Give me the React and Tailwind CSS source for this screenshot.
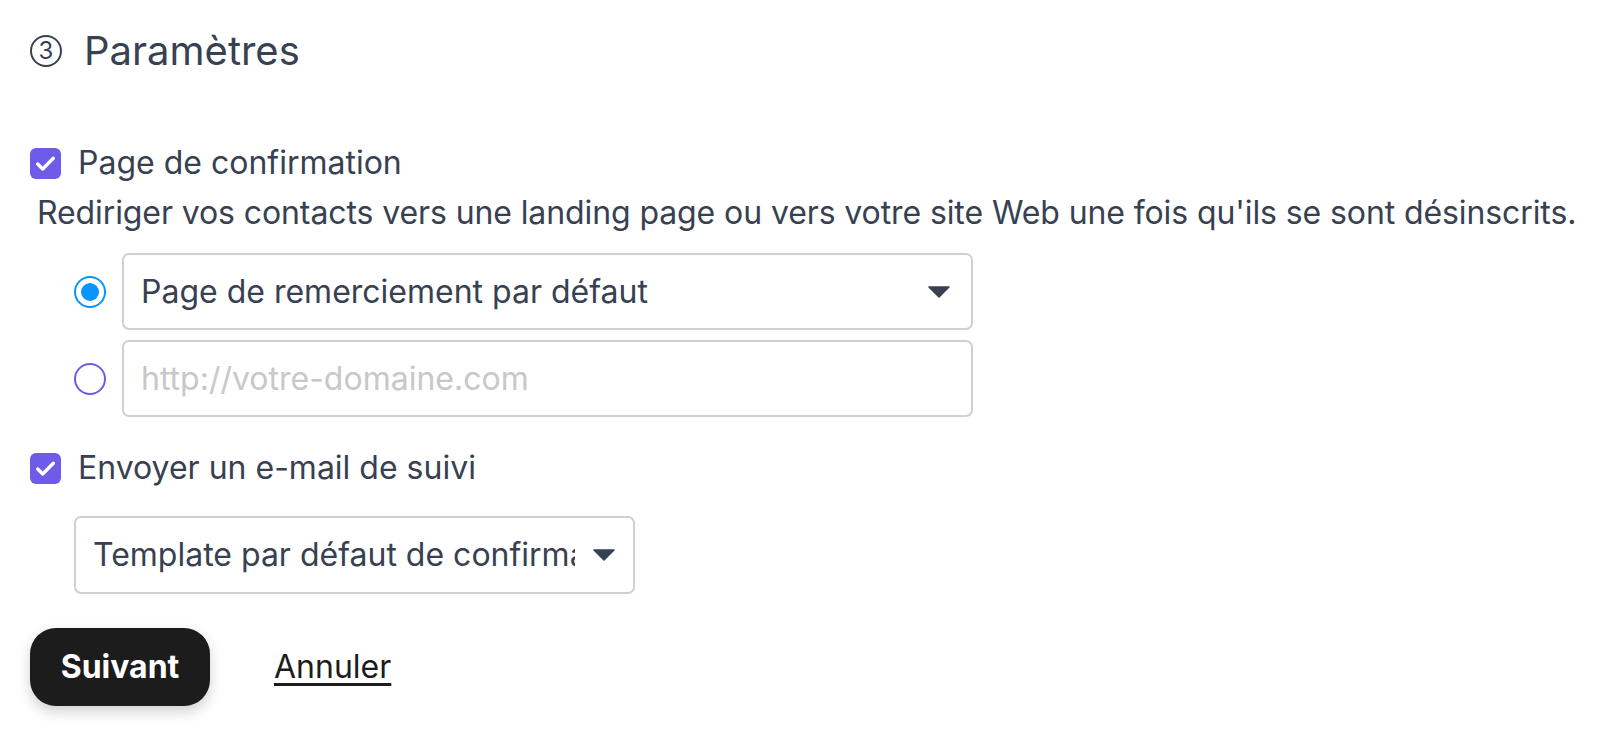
import { useState } from 'react'

function Check() {
  return (
    <span className="flex h-[31px] w-[31px] shrink-0 items-center justify-center rounded-[6px] bg-[#6c5ce7]">
      <svg width="25" height="25" viewBox="0 0 24 24" fill="none">
        <path d="M4.5 12.5l4.8 4.8L19.5 7" stroke="#fff" strokeWidth="3.2" strokeLinecap="round" strokeLinejoin="round" />
      </svg>
    </span>
  )
}

function Caret() {
  return (
    <svg width="22" height="12" viewBox="0 0 22 12" className="shrink-0">
      <path d="M1 1h20L11 11z" fill="#374151" stroke="#374151" strokeWidth="1.5" strokeLinejoin="round" />
    </svg>
  )
}

export default function App() {
  const [mode, setMode] = useState('default')

  return (
    <div
      className="min-h-screen bg-white pl-[30px] pt-[27px] text-[#374151]"
      style={{ fontFamily: 'Inter, "Noto Sans", sans-serif' }}
    >
      {/* step title */}
      <div className="flex h-[48px] items-center gap-[22px]">
        <span className="flex h-[32px] w-[32px] items-center justify-center rounded-full border-2 border-[#374151] text-[24px] leading-none">
          3
        </span>
        <h2 className="text-[40px] leading-[48px]">Paramètres</h2>
      </div>

      <label className="mt-[68px] flex h-[40px] items-center gap-[17px]">
        <Check />
        <span className="text-[32px] leading-[40px]">Page de confirmation</span>
      </label>
      <p className="mt-[10px] pl-[7px] text-[32px] leading-[40px] whitespace-nowrap tracking-[-0.1px]">
        Rediriger vos contacts vers une landing page ou vers votre site Web une fois qu'ils se sont désinscrits.
      </p>

      <div className="mt-[20px] flex flex-col gap-[10px] pl-[44px]">
        <div className="flex items-center gap-[16px]">
          <button
            onClick={() => setMode('default')}
            className={
              mode === 'default'
                ? 'flex h-[32px] w-[32px] shrink-0 items-center justify-center rounded-full border-2 border-[#0a94ff]'
                : 'h-[32px] w-[32px] shrink-0 rounded-full border-2 border-[#6c5ce7]'
            }
          >
            {mode === 'default' && <span className="h-[18px] w-[18px] rounded-full bg-[#0a94ff]" />}
          </button>
          <div className="flex h-[77px] w-[851px] items-center justify-between rounded-[7px] border-2 border-[#d0d0d0] pl-[17px] pr-[21px]">
            <span className="text-[32px]">Page de remerciement par défaut</span>
            <Caret />
          </div>
        </div>
        <div className="flex items-center gap-[16px]">
          <button
            onClick={() => setMode('url')}
            className={
              mode === 'url'
                ? 'flex h-[32px] w-[32px] shrink-0 items-center justify-center rounded-full border-2 border-[#0a94ff]'
                : 'h-[32px] w-[32px] shrink-0 rounded-full border-2 border-[#6c5ce7]'
            }
          >
            {mode === 'url' && <span className="h-[18px] w-[18px] rounded-full bg-[#0a94ff]" />}
          </button>
          <input
            placeholder="http://votre-domaine.com"
            className="h-[77px] w-[851px] rounded-[7px] border-2 border-[#d0d0d0] pl-[17px] text-[32px] outline-none placeholder:text-[#c8c8c8]"
          />
        </div>
      </div>

      <label className="mt-[31px] flex h-[40px] items-center gap-[17px]">
        <Check />
        <span className="text-[32px] leading-[40px]">Envoyer un e-mail de suivi</span>
      </label>

      <div className="ml-[44px] mt-[28px] flex h-[78px] w-[561px] items-center gap-[18px] rounded-[7px] border-2 border-[#d0d0d0] pl-[17px] pr-[18px]">
        <span className="min-w-0 flex-1 overflow-hidden whitespace-nowrap text-[32px]">
          Template par défaut de confirmation
        </span>
        <Caret />
      </div>

      <div className="mt-[34px] flex items-center gap-[64px]">
        <button className="h-[78px] w-[180px] rounded-[26px] bg-[#1c1c1c] text-[32px] font-bold text-white shadow-[0_6px_14px_rgba(0,0,0,0.18)]">
          Suivant
        </button>
        <a href="#" className="text-[32px] text-[#1c1c1c] underline underline-offset-[5px]">
          Annuler
        </a>
      </div>
    </div>
  )
}
